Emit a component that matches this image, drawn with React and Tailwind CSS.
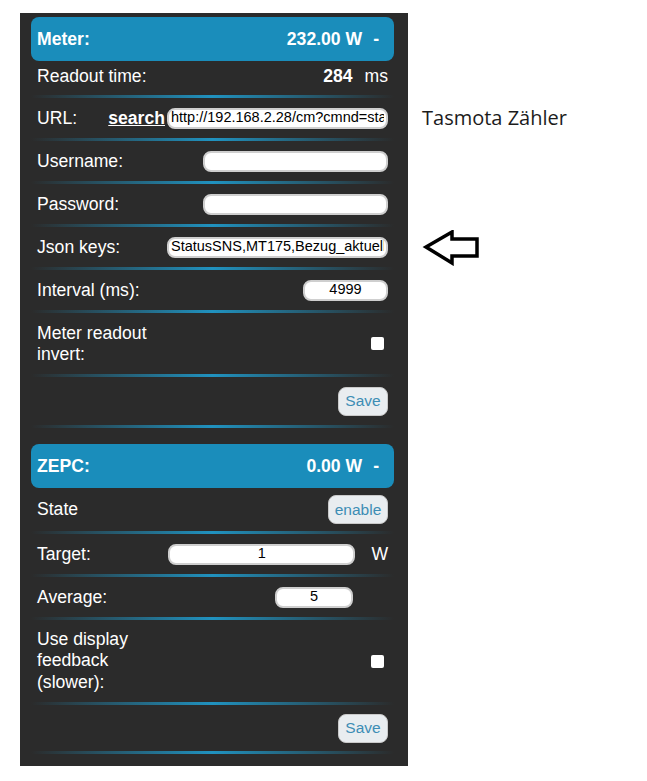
import React from 'react';

function Sep() {
  return (
    <div className="h-[3px] bg-[linear-gradient(90deg,#2b2b2b,#2092bf_50%,#2b2b2b)]" />
  );
}

function Header({ title, value }) {
  return (
    <div className="h-[44px] rounded-[8px] bg-[#1a8dbb] flex items-center justify-between pl-[6px] pr-[15px] text-white font-bold text-[17.6px]">
      <span>{title}</span>
      <span>
        {value}
        <span className="ml-[11px]">-</span>
      </span>
    </div>
  );
}

function Field({ value, className }) {
  return (
    <input
      readOnly
      value={value}
      className={`h-[21px] rounded-[8px] border-2 border-[#cfcfcf] bg-white px-[2px] text-[14.5px] text-black outline-none ${className}`}
    />
  );
}

function Checkbox() {
  return <div className="w-[13px] h-[13px] bg-white rounded-[2px] mr-[4px]" />;
}

function Button({ label, className }) {
  return (
    <button className={`h-[29px] rounded-[8px] border border-[#c9c9c9] bg-[#e9edf0] text-[15.5px] text-[#3d8db5] ${className}`}>
      {label}
    </button>
  );
}

export default function App() {
  return (
    <div className="min-h-[781px] bg-white flex font-['Liberation_Sans',Arial,sans-serif]">
      <div className="ml-[20px] mt-[13px] mb-[15px] w-[388px] bg-[#2b2b2b] pl-[11px] pr-[14px] pt-[4px] pb-[10px] text-[17.6px] text-white">
        <Header title="Meter:" value="232.00 W" />

        <div className="h-[34px] px-[6px] pb-[4px] flex items-center justify-between">
          <span>Readout time:</span>
          <span>
            <b>284</b>
            <span className="ml-[12px]">ms</span>
          </span>
        </div>
        <Sep />

        <div className="h-[40px] px-[6px] flex items-center">
          <span>URL:</span>
          <span className="ml-auto font-bold underline mr-[2px]">search</span>
          <Field value="http://192.168.2.28/cm?cmnd=status%2010" className="w-[221px]" />
        </div>
        <Sep />

        <div className="h-[40px] px-[6px] flex items-center justify-between">
          <span>Username:</span>
          <Field value="" className="w-[185px]" />
        </div>
        <Sep />

        <div className="h-[40px] px-[6px] flex items-center justify-between">
          <span>Password:</span>
          <Field value="" className="w-[185px]" />
        </div>
        <Sep />

        <div className="h-[40px] px-[6px] flex items-center justify-between">
          <span>Json keys:</span>
          <Field value="StatusSNS,MT175,Bezug_aktuell" className="w-[221px]" />
        </div>
        <Sep />

        <div className="h-[40px] px-[6px] flex items-center justify-between">
          <span>Interval (ms):</span>
          <Field value="4999" className="w-[85px] text-center" />
        </div>
        <Sep />

        <div className="h-[61px] px-[6px] flex items-center justify-between">
          <span className="leading-[21px]">
            Meter readout
            <br />
            invert:
          </span>
          <Checkbox />
        </div>
        <Sep />

        <div className="h-[48px] px-[6px] flex items-center justify-end">
          <Button label="Save" className="w-[50px]" />
        </div>
        <Sep />

        <div className="h-[16px]" />
        <Header title="ZEPC:" value="0.00 W" />

        <div className="h-[43px] px-[6px] flex items-center justify-between">
          <span>State</span>
          <Button label="enable" className="w-[60px]" />
        </div>
        <Sep />

        <div className="h-[40px] px-[6px] flex items-center">
          <span>Target:</span>
          <Field value="1" className="ml-auto w-[187px] text-center" />
          <span className="ml-[16px]">W</span>
        </div>
        <Sep />

        <div className="h-[40px] px-[6px] flex items-center">
          <span>Average:</span>
          <Field value="5" className="ml-auto mr-[35px] w-[78px] text-center" />
        </div>
        <Sep />

        <div className="h-[82px] px-[6px] flex items-center justify-between">
          <span className="leading-[21.5px]">
            Use display
            <br />
            feedback
            <br />
            (slower):
          </span>
          <Checkbox />
        </div>
        <Sep />

        <div className="h-[46px] px-[6px] flex items-center justify-end">
          <Button label="Save" className="w-[50px]" />
        </div>
        <Sep />
      </div>

      {/* annotations drawn over the screenshot */}
      <div className="ml-[14px] pt-[104px] flex flex-col font-['Open_Sans','Noto_Sans',sans-serif]">
        <span className="text-[20px] leading-[28px] text-[#1c1c1c]">Tasmota Zähler</span>
        <svg className="mt-[98px]" width="60" height="36" viewBox="0 0 60 36">
          <polygon
            points="4,17 30,2 30,9 55,9 55,26 30,26 30,33"
            fill="white"
            stroke="black"
            strokeWidth="3.5"
            strokeLinejoin="miter"
          />
        </svg>
      </div>
    </div>
  );
}
